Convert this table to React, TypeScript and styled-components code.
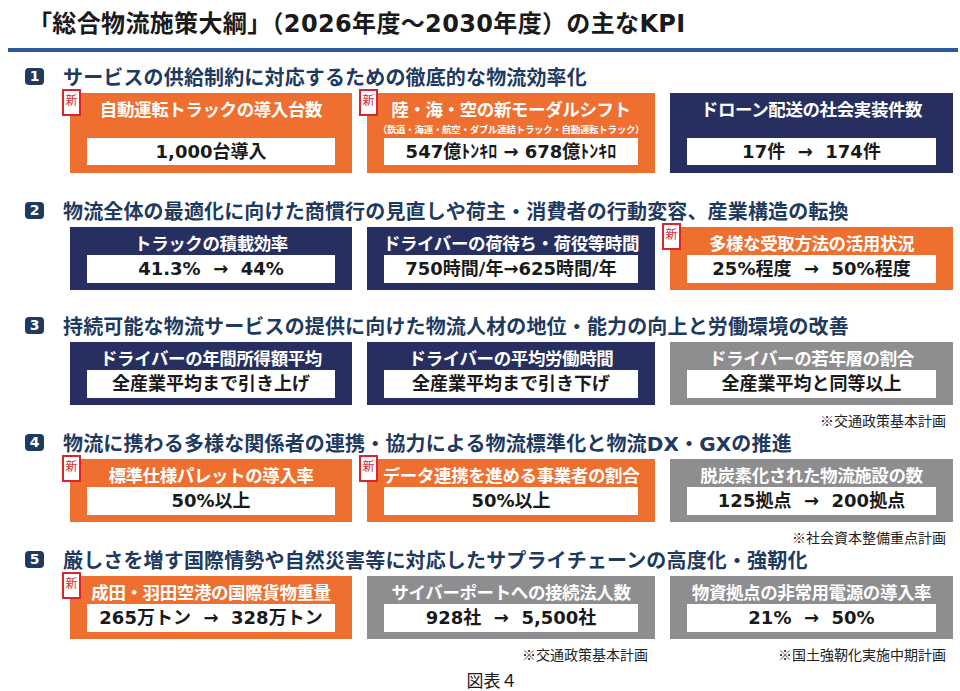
import React from "react";
import styled, { createGlobalStyle } from "styled-components";

type Tone = "orange" | "navy" | "gray";

interface IKpiCard {
  tone: Tone;
  label: string;
  value: string;
  sub?: string;
  isNew?: boolean;
}

interface ISection {
  no: number;
  title: string;
  gapTop: number;
  cards: IKpiCard[];
  notes?: (string | null)[];
}

const TONES: Record<Tone, string> = {
  orange: "#ef6f30",
  navy: "#262f60",
  gray: "#8e8e90"
};

const sections: ISection[] = [
  {
    no: 1,
    title: "サービスの供給制約に対応するための徹底的な物流効率化",
    gapTop: 10,
    cards: [
      { tone: "orange", isNew: true, label: "自動運転トラックの導入台数", value: "1,000台導入" },
      {
        tone: "orange",
        isNew: true,
        label: "陸・海・空の新モーダルシフト",
        sub: "（鉄道・海運・航空・ダブル連結トラック・自動運転トラック）",
        value: "547億ﾄﾝｷﾛ → 678億ﾄﾝｷﾛ"
      },
      { tone: "navy", label: "ドローン配送の社会実装件数", value: "17件  →  174件" }
    ]
  },
  {
    no: 2,
    title: "物流全体の最適化に向けた商慣行の見直しや荷主・消費者の行動変容、産業構造の転換",
    gapTop: 23,
    cards: [
      { tone: "navy", label: "トラックの積載効率", value: "41.3%  →  44%" },
      { tone: "navy", label: "ドライバーの荷待ち・荷役等時間", value: "750時間/年→625時間/年" },
      { tone: "orange", isNew: true, label: "多様な受取方法の活用状況", value: "25%程度  →  50%程度" }
    ]
  },
  {
    no: 3,
    title: "持続可能な物流サービスの提供に向けた物流人材の地位・能力の向上と労働環境の改善",
    gapTop: 21,
    cards: [
      { tone: "navy", label: "ドライバーの年間所得額平均", value: "全産業平均まで引き上げ" },
      { tone: "navy", label: "ドライバーの平均労働時間", value: "全産業平均まで引き下げ" },
      { tone: "gray", label: "ドライバーの若年層の割合", value: "全産業平均と同等以上" }
    ],
    notes: [null, null, "※交通政策基本計画"]
  },
  {
    no: 4,
    title: "物流に携わる多様な関係者の連携・協力による物流標準化と物流DX・GXの推進",
    gapTop: 0,
    cards: [
      { tone: "orange", isNew: true, label: "標準仕様パレットの導入率", value: "50%以上" },
      { tone: "orange", isNew: true, label: "データ連携を進める事業者の割合", value: "50%以上" },
      { tone: "gray", label: "脱炭素化された物流施設の数", value: "125拠点  →  200拠点" }
    ],
    notes: [null, null, "※社会資本整備重点計画"]
  },
  {
    no: 5,
    title: "厳しさを増す国際情勢や自然災害等に対応したサプライチェーンの高度化・強靭化",
    gapTop: 0,
    cards: [
      { tone: "orange", isNew: true, label: "成田・羽田空港の国際貨物重量", value: "265万トン  →  328万トン" },
      { tone: "gray", label: "サイバーポートへの接続法人数", value: "928社  →  5,500社" },
      { tone: "gray", label: "物資拠点の非常用電源の導入率", value: "21%  →  50%" }
    ],
    notes: [null, "※交通政策基本計画", "※国土強靭化実施中期計画"]
  }
];

const App = () => {
  return (
    <>
      <GlobalStyle />
      <Page>
        <Header>
          <h1>「総合物流施策大綱」（2026年度～2030年度）の主なKPI</h1>
        </Header>
        {sections.map((section) => (
          <Section key={section.no} $gapTop={section.gapTop}>
            <Heading>
              <NumberBadge>{section.no}</NumberBadge>
              <HeadingText>{section.title}</HeadingText>
            </Heading>
            <CardGrid>
              {section.cards.map((card) => (
                <Card key={card.label} $tone={card.tone} $tall={section.no === 1}>
                  {card.isNew && <NewBadge>新</NewBadge>}
                  <CardLabel>{card.label}</CardLabel>
                  {card.sub && <CardSub>{card.sub}</CardSub>}
                  <ValueBox $tall={section.no === 1}>{card.value}</ValueBox>
                </Card>
              ))}
            </CardGrid>
            {section.notes && (
              <NoteGrid>
                {section.notes.map((note, i) => (
                  <Note key={i}>{note}</Note>
                ))}
              </NoteGrid>
            )}
          </Section>
        ))}
        <Caption>図表４</Caption>
      </Page>
    </>
  );
};

export default App;

const GlobalStyle = createGlobalStyle`
  html, body {
    margin: 0;
    padding: 0;
    background: #ffffff;
  }
  body {
    font-family: "DejaVu Sans", "Noto Sans CJK JP", sans-serif;
    color: #1a1a1a;
  }
`;

const Page = styled.div`
  width: 960px;
  height: 691px;
  overflow: hidden;
  background: #ffffff;
`;

const Header = styled.div`
  margin: 0 2px 0 8px;
  height: 48px;
  border-bottom: 4px solid #2a5b98;
  h1 {
    margin: 0;
    padding-left: 20px;
    font-size: 24px;
    line-height: 48px;
    font-weight: 700;
    color: #1a1a1a;
    letter-spacing: 0.35px;
    white-space: nowrap;
  }
`;

const Section = styled.section<{ $gapTop: number }>`
  margin-top: ${(props) => props.$gapTop}px;
`;

const Heading = styled.div`
  display: flex;
  align-items: center;
  height: 28px;
  margin-bottom: 3px;
  padding-left: 25px;
`;

const NumberBadge = styled.div`
  display: flex;
  align-items: center;
  justify-content: center;
  width: 19px;
  height: 17px;
  border-radius: 4px;
  background: #1f3a5f;
  color: #ffffff;
  font-size: 14px;
  font-weight: 700;
  line-height: 1;
`;

const HeadingText = styled.div`
  margin-left: 19px;
  font-size: 20px;
  font-weight: 700;
  color: #1f3a5f;
  letter-spacing: 0.15px;
  white-space: nowrap;
`;

const CardGrid = styled.div`
  display: grid;
  grid-template-columns: 282px 288px 283px;
  column-gap: 15px;
  padding-left: 70px;
`;

const Card = styled.div<{ $tone: Tone; $tall: boolean }>`
  position: relative;
  display: flex;
  flex-direction: column;
  height: ${(props) => (props.$tall ? 80 : 63)}px;
  box-sizing: border-box;
  padding: 6px 17px ${(props) => (props.$tall ? 8 : 7)}px;
  background: ${(props) => TONES[props.$tone]};
`;

const NewBadge = styled.div`
  position: absolute;
  left: -8px;
  top: -4px;
  width: 19px;
  height: 27px;
  box-sizing: border-box;
  border: 2px solid #d9262e;
  background: #ffffff;
  color: #d9262e;
  font-family: "Noto Sans CJK JP", sans-serif;
  font-size: 12px;
  line-height: 1;
  text-align: center;
  padding-top: 3px;
`;

const CardLabel = styled.div`
  margin: 0 -14px;
  height: 22px;
  line-height: 22px;
  font-size: 17.5px;
  font-weight: 700;
  color: #ffffff;
  text-align: center;
  letter-spacing: -0.4px;
  white-space: nowrap;
`;

const CardSub = styled.div`
  margin: 2px -14px 0;
  height: 14px;
  line-height: 14px;
  font-size: 9.5px;
  font-weight: 700;
  color: #ffffff;
  text-align: center;
  letter-spacing: -0.3px;
  white-space: nowrap;
`;

const ValueBox = styled.div<{ $tall: boolean }>`
  margin-top: auto;
  height: ${(props) => (props.$tall ? 27 : 28)}px;
  line-height: ${(props) => (props.$tall ? 27 : 28)}px;
  background: #ffffff;
  text-align: center;
  font-size: 18px;
  font-weight: 700;
  color: #1a1a1a;
  white-space: pre;
`;

const NoteGrid = styled.div`
  display: grid;
  grid-template-columns: 282px 288px 283px;
  column-gap: 15px;
  padding-left: 70px;
  margin-top: 7px;
  height: 16px;
`;

const Note = styled.div`
  text-align: right;
  padding-right: 7px;
  font-family: "Noto Sans CJK JP", sans-serif;
  font-size: 14px;
  line-height: 16px;
  color: #222222;
  white-space: nowrap;
`;

const Caption = styled.div`
  margin-top: 9px;
  text-align: center;
  padding-left: 24px;
  font-family: "Noto Sans CJK JP", sans-serif;
  font-size: 17px;
  line-height: 18px;
  color: #1a1a1a;
`;
